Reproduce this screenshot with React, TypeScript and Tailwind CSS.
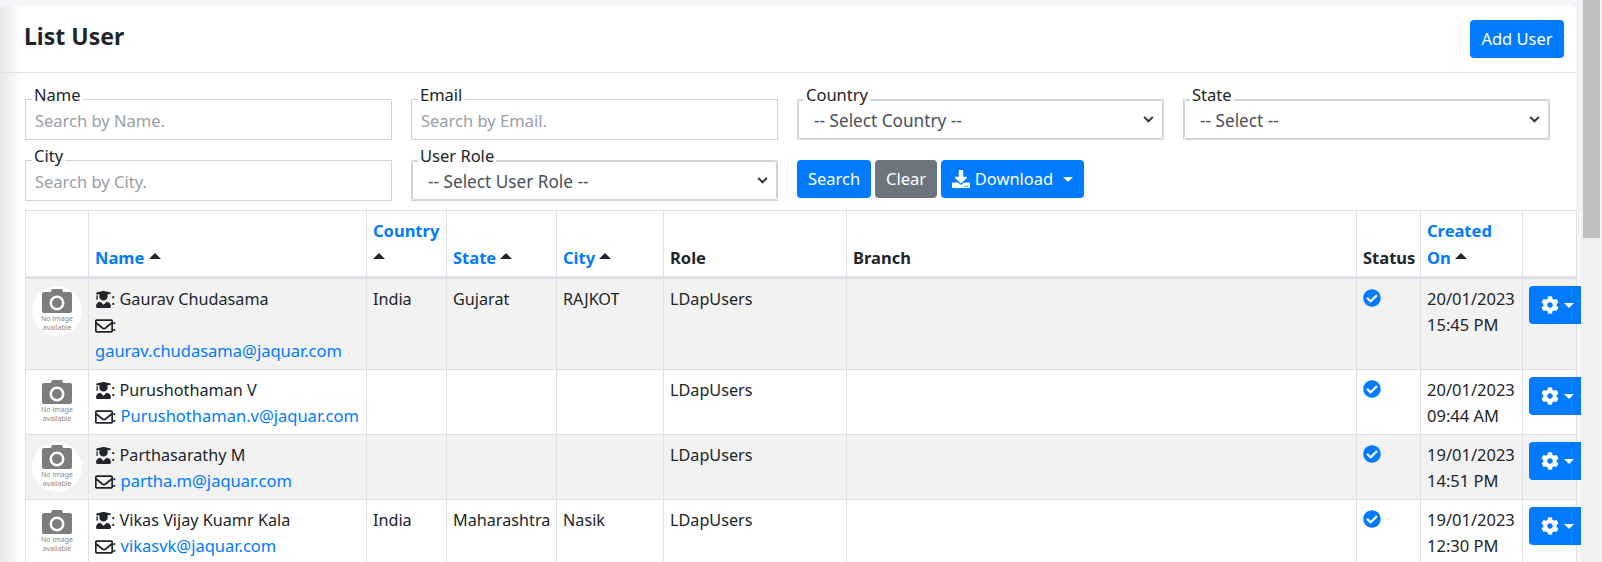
import { FaCheckCircle, FaCog, FaDownload, FaRegEnvelope, FaUserGraduate } from 'react-icons/fa'

const USERS = [
  { name: 'Gaurav Chudasama', email: 'gaurav.chudasama@jaquar.com', country: 'India', state: 'Gujarat', city: 'RAJKOT', date: '20/01/2023', time: '15:45 PM' },
  { name: 'Purushothaman V', email: 'Purushothaman.v@jaquar.com', country: '', state: '', city: '', date: '20/01/2023', time: '09:44 AM' },
  { name: 'Parthasarathy M', email: 'partha.m@jaquar.com', country: '', state: '', city: '', date: '19/01/2023', time: '14:51 PM' },
  { name: 'Vikas Vijay Kuamr Kala', email: 'vikasvk@jaquar.com', country: 'India', state: 'Maharashtra', city: 'Nasik', date: '19/01/2023', time: '12:30 PM' },
]

const cell = 'border border-[#dee2e6] pl-[6px] pr-[5px] pt-[7px] pb-[5px] align-top text-[16.2px]'
const head = 'border border-[#dee2e6] border-b-[3px] pl-[6px] pr-[5px] pt-[6px] pb-[5px] align-bottom text-left font-bold leading-[27px]'

function Caret({ down, className }: { down?: boolean; className?: string }) {
  return (
    <svg
      viewBox="0 0 10 5"
      className={`inline-block ${down ? 'h-[5px] w-[10px]' : 'h-[6px] w-[12px]'} ${className ?? ''}`}
      fill="currentColor"
    >
      <path d={down ? 'M0 0h10L5 5z' : 'M0 5h10L5 0z'} />
    </svg>
  )
}

function NoImage() {
  return (
    <div className="flex h-[50px] w-[50px] flex-col items-center rounded-full bg-white pt-[3px]">
      <svg viewBox="0 0 30 24" className="h-[24px] w-[30px] text-[#7d7d7d]">
        <path fill="currentColor" fillRule="evenodd" d="M2 3h7l1-3h10l1 3h7a2 2 0 0 1 2 2v17a2 2 0 0 1-2 2H2a2 2 0 0 1-2-2V5a2 2 0 0 1 2-2zm13 3.5a7.5 7.5 0 1 0 0 15 7.5 7.5 0 0 0 0-15zm0 2.5a5 5 0 1 1 0 10 5 5 0 0 1 0-10z" />
      </svg>
      <div className="mt-[1px] text-center text-[7px] leading-[9px] text-[#8a8a8a]">
        No image
        <br />
        available
      </div>
    </div>
  )
}

function Field({ label, children }: { label: string; children: React.ReactNode }) {
  return (
    <div className="relative h-[41px]">
      <span className="absolute left-[7px] top-[-16px] z-10 bg-white px-[2px] leading-[24px] text-[#212529]">{label}</span>
      {children}
    </div>
  )
}

function TextField({ label, placeholder }: { label: string; placeholder: string }) {
  return (
    <Field label={label}>
      <input
        placeholder={placeholder}
        className="h-full w-full border border-[#ced4da] bg-white px-[9px] pt-[1px] text-[#495057] outline-none placeholder:text-[#9aa0a6]"
      />
    </Field>
  )
}

function SelectField({ label, value }: { label: string; value: string }) {
  return (
    <Field label={label}>
      <div className="relative h-full border border-[#ced4da]">
        <select className="h-full w-full appearance-none rounded-[3px] border border-[#ced4da] bg-white px-[15px] pt-[3px] text-[17.2px] text-[#495057] outline-none">
          <option>{value}</option>
        </select>
        <svg viewBox="0 0 12 8" className="pointer-events-none absolute right-[9px] top-[16px] h-[7px] w-[11px] text-[#343a40]" fill="none" stroke="currentColor" strokeWidth="2.4">
          <path d="M1 1l5 5 5-5" />
        </svg>
      </div>
    </Field>
  )
}

export default function App() {
  return (
    <div className="flex h-[562px] w-[1602px] overflow-hidden bg-[#f4f6f9] font-['Noto_Sans',sans-serif] text-[16.5px] leading-[26px] text-[#212529]">
      <div className="w-[1581px] shrink-0 pt-[5px]">
        <div className="h-[600px] w-[1576px] rounded-[6px] bg-white bg-linear-to-r from-[#e8e8e8] to-white to-[22px]">
          <header className="flex h-[68px] items-start justify-between border-b border-[#dfe2e6] pl-[24px] pr-[12px] pt-[15px]">
            <h1 className="mt-[2px] text-[23px] font-bold leading-[28px] text-[#212529]">List User</h1>
            <button className="h-[38px] w-[94px] rounded-[4px] bg-[#007bff] text-white">Add User</button>
          </header>

          <div className="grid grid-cols-[repeat(4,367px)] gap-x-[19px] gap-y-[20px] pl-[25px] pt-[26px]">
            <TextField label="Name" placeholder="Search by Name." />
            <TextField label="Email" placeholder="Search by Email." />
            <SelectField label="Country" value="-- Select Country --" />
            <SelectField label="State" value="-- Select --" />
            <TextField label="City" placeholder="Search by City." />
            <SelectField label="User Role" value="-- Select User Role --" />
            <div className="flex h-[38px] gap-[4px] text-white">
              <button className="w-[74px] rounded-[4px] bg-[#007bff]">Search</button>
              <button className="w-[62px] rounded-[4px] bg-[#6c757d]">Clear</button>
              <button className="flex w-[143px] items-center justify-center gap-[5px] rounded-[4px] bg-[#007bff]">
                <FaDownload className="h-[18px] w-[18px]" />
                Download
                <Caret down className="ml-[5px]" />
              </button>
            </div>
          </div>

          <div className="ml-[25px] mt-[9px] w-[1556px] overflow-hidden">
            <table className="w-[1551px] table-fixed border-collapse">
              <colgroup>
                <col className="w-[63px]" />
                <col className="w-[278px]" />
                <col className="w-[80px]" />
                <col className="w-[110px]" />
                <col className="w-[107px]" />
                <col className="w-[183px]" />
                <col className="w-[510px]" />
                <col className="w-[64px]" />
                <col className="w-[102px]" />
                <col className="w-[54px]" />
              </colgroup>
              <thead>
                <tr>
                  <th className={head} />
                  <th className={head}><span className="text-[#007bff]">Name</span> <Caret className="mb-[7px]" /></th>
                  <th className={head}><span className="text-[#007bff]">Country</span> <Caret className="mb-[7px]" /></th>
                  <th className={head}><span className="text-[#007bff]">State</span> <Caret className="mb-[7px]" /></th>
                  <th className={head}><span className="text-[#007bff]">City</span> <Caret className="mb-[7px]" /></th>
                  <th className={head}>Role</th>
                  <th className={head}>Branch</th>
                  <th className={head}>Status</th>
                  <th className={head}><span className="text-[#007bff]">Created On</span> <Caret className="mb-[7px]" /></th>
                  <th className={head} />
                </tr>
              </thead>
              <tbody>
                {USERS.map((u, i) => (
                  <tr key={u.email} className={i % 2 === 0 ? 'bg-[#f2f2f2]' : 'bg-white'}>
                    <td className={cell}><NoImage /></td>
                    <td className={cell}>
                      <div>
                        <FaUserGraduate className="mr-[-1px] inline-block h-[17px] w-[17px] align-[-3px]" />: {u.name}
                      </div>
                      <div>
                        <FaRegEnvelope className="mr-[-1px] inline-block h-[18px] w-[18px] align-[-4px]" />: <a className="text-[16.5px] text-[#007bff]">{u.email}</a>
                      </div>
                    </td>
                    <td className={cell}>{u.country}</td>
                    <td className={cell}>{u.state}</td>
                    <td className={cell}>{u.city}</td>
                    <td className={cell}>LDapUsers</td>
                    <td className={cell} />
                    <td className={cell}>
                      <FaCheckCircle className="mt-[3px] h-[18px] w-[18px] text-[#007bff]" />
                    </td>
                    <td className={`${cell} text-[16.5px]`}>
                      {u.date}
                      <br />
                      {u.time}
                    </td>
                    <td className={`${cell} whitespace-nowrap`}>
                      <button className="relative flex h-[38px] w-[60px] items-center gap-[5px] rounded-[4px] bg-[#007bff] pl-[12px] text-white">
                        <FaCog className="h-[18px] w-[18px]" />
                        <Caret down />
                      </button>
                    </td>
                  </tr>
                ))}
              </tbody>
            </table>
          </div>
        </div>
      </div>
      <div className="flex-1 bg-[#f1f1f1] pl-[2px]">
        <div className="h-[238px] w-[17px] bg-[#c1c1c1]" />
      </div>
    </div>
  )
}
